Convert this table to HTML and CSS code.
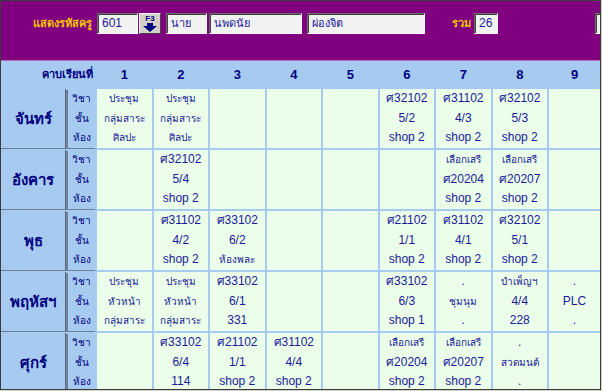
FILE: index.html
```html
<!DOCTYPE html>
<html lang="th">
<head>
<meta charset="utf-8">
<title>ตารางสอน</title>
<link rel="stylesheet" href="styles.css">
</head>
<body>
<div class="frame">
  <div class="topbar">
    <span class="lbl lbl-code">แสดงรหัสครู</span>
    <span class="field f-code">601</span>
    <span class="btn-f3"><span class="f3">F3</span><svg class="arrow" width="14" height="9" viewBox="0 0 14 9"><rect x="4" y="0" width="6" height="3" fill="#000080"/><polygon points="0,3 14,3 7,9" fill="#000080"/></svg></span>
    <span class="field f-title">นาย</span>
    <span class="field f-first">นพดนัย</span>
    <span class="field f-last">ผ่องจิต</span>
    <span class="lbl lbl-sum">รวม</span>
    <span class="field f-sum">26</span>
    <span class="field f-extra"></span>
  </div>
  <div class="grid">
    <div class="hd hd-title">คาบเรียนที่</div>
    <div class="hd">1</div><div class="hd">2</div><div class="hd">3</div><div class="hd">4</div><div class="hd">5</div><div class="hd">6</div><div class="hd">7</div><div class="hd">8</div><div class="hd">9</div>

    <div class="day">จันทร์</div>
    <div class="keys"><span>วิชา</span><span>ชั้น</span><span>ห้อง</span></div>
    <div class="cell th"><span>ประชุม</span><span>กลุ่มสาระ</span><span>ศิลปะ</span></div>
    <div class="cell th"><span>ประชุม</span><span>กลุ่มสาระ</span><span>ศิลปะ</span></div>
    <div class="cell"></div>
    <div class="cell"></div>
    <div class="cell"></div>
    <div class="cell"><span>ศ32102</span><span>5/2</span><span>shop 2</span></div>
    <div class="cell"><span>ศ31102</span><span>4/3</span><span>shop 2</span></div>
    <div class="cell"><span>ศ32102</span><span>5/3</span><span>shop 2</span></div>
    <div class="cell"></div>

    <div class="day">อังคาร</div>
    <div class="keys"><span>วิชา</span><span>ชั้น</span><span>ห้อง</span></div>
    <div class="cell"></div>
    <div class="cell"><span>ศ32102</span><span>5/4</span><span>shop 2</span></div>
    <div class="cell"></div>
    <div class="cell"></div>
    <div class="cell"></div>
    <div class="cell"></div>
    <div class="cell"><span class="t">เลือกเสรี</span><span>ศ20204</span><span>shop 2</span></div>
    <div class="cell"><span class="t">เลือกเสรี</span><span>ศ20207</span><span>shop 2</span></div>
    <div class="cell"></div>

    <div class="day">พุธ</div>
    <div class="keys"><span>วิชา</span><span>ชั้น</span><span>ห้อง</span></div>
    <div class="cell"></div>
    <div class="cell"><span>ศ31102</span><span>4/2</span><span>shop 2</span></div>
    <div class="cell"><span>ศ33102</span><span>6/2</span><span class="t">ห้องพละ</span></div>
    <div class="cell"></div>
    <div class="cell"></div>
    <div class="cell"><span>ศ21102</span><span>1/1</span><span>shop 2</span></div>
    <div class="cell"><span>ศ31102</span><span>4/1</span><span>shop 2</span></div>
    <div class="cell"><span>ศ32102</span><span>5/1</span><span>shop 2</span></div>
    <div class="cell"></div>

    <div class="day">พฤหัสฯ</div>
    <div class="keys"><span>วิชา</span><span>ชั้น</span><span>ห้อง</span></div>
    <div class="cell th"><span>ประชุม</span><span>หัวหน้า</span><span>กลุ่มสาระ</span></div>
    <div class="cell th"><span>ประชุม</span><span>หัวหน้า</span><span>กลุ่มสาระ</span></div>
    <div class="cell"><span>ศ33102</span><span>6/1</span><span>331</span></div>
    <div class="cell"></div>
    <div class="cell"></div>
    <div class="cell"><span>ศ33102</span><span>6/3</span><span>shop 1</span></div>
    <div class="cell"><span class="dot">.</span><span class="t">ชุมนุม</span><span class="dot">.</span></div>
    <div class="cell"><span class="t">บำเพ็ญฯ</span><span>4/4</span><span>228</span></div>
    <div class="cell"><span class="dot">.</span><span>PLC</span><span class="dot">.</span></div>

    <div class="day">ศุกร์</div>
    <div class="keys"><span>วิชา</span><span>ชั้น</span><span>ห้อง</span></div>
    <div class="cell"></div>
    <div class="cell"><span>ศ33102</span><span>6/4</span><span>114</span></div>
    <div class="cell"><span>ศ21102</span><span>1/1</span><span>shop 2</span></div>
    <div class="cell"><span>ศ31102</span><span>4/4</span><span>shop 2</span></div>
    <div class="cell"></div>
    <div class="cell"><span class="t">เลือกเสรี</span><span>ศ20204</span><span>shop 2</span></div>
    <div class="cell"><span class="t">เลือกเสรี</span><span>ศ20207</span><span>shop 2</span></div>
    <div class="cell"><span class="dot">.</span><span class="t">สวดมนต์</span><span class="dot">.</span></div>
    <div class="cell"></div>
  </div>
</div>
</body>
</html>
```
FILE: styles.css
```css
html, body {
  margin: 0;
  padding: 0;
  background: #d4d0c8;
}
body {
  font-family: "Liberation Sans", "Noto Sans", "DejaVu Sans", sans-serif;
  color: #1a1a9a;
}
.frame {
  width: 601px;
  height: 390px;
  box-sizing: border-box;
  border: 1px solid #3c3c3c;
  overflow: hidden;
  background: #a6caf0;
}
.topbar {
  height: 60px;
  box-sizing: border-box;
  background: #800080;
  border-bottom: 1px solid #b070b0;
  display: flex;
  align-items: flex-start;
  padding-top: 12px;
  overflow: hidden;
}
.topbar > * {
  flex-shrink: 0;
}
.lbl {
  color: #f0c400;
  font-size: 11px;
  font-weight: bold;
  line-height: 21px;
}
.lbl-code { margin-left: 32px; width: 64px; }
.lbl-sum { margin-left: 27px; width: 22px; }
.field {
  height: 21px;
  box-sizing: border-box;
  background: #f2f2f2;
  border-top: 1px solid #6a6a6a;
  border-left: 1px solid #6a6a6a;
  border-right: 1px solid #ffffff;
  border-bottom: 1px solid #ffffff;
  box-shadow: inset 1px 1px 0 #404040;
  color: #1a1a9a;
  font-size: 11px;
  line-height: 19px;
  padding-left: 4px;
  white-space: nowrap;
  overflow: hidden;
}
.f-code { width: 41px; font-size: 12px; }
.btn-f3 {
  width: 22px;
  height: 21px;
  margin-left: 1px;
  box-sizing: border-box;
  background: #d4d0c8;
  border-top: 1px solid #ffffff;
  border-left: 1px solid #ffffff;
  border-right: 1px solid #404040;
  border-bottom: 1px solid #404040;
  display: flex;
  flex-direction: column;
  align-items: center;
}
.f3 {
  font-size: 8px;
  line-height: 9px;
  color: #000080;
  font-weight: bold;
}
.arrow { display: block; }
.f-title { width: 41px; margin-left: 5px; }
.f-first { width: 93px; margin-left: 2px; }
.f-last { width: 118px; margin-left: 5px; }
.f-sum { width: 24px; margin-left: 0; font-size: 12px; }
.f-extra { width: 10px; margin-left: 97px; }

.grid {
  display: grid;
  grid-template-columns: 65px 27px repeat(8, 54.5px) 1fr;
  grid-template-rows: 26px repeat(5, 59px);
  gap: 2px;
  background: #a6caf0;
}
.hd {
  display: flex;
  align-items: center;
  justify-content: center;
  font-weight: bold;
  font-size: 13px;
  color: #000080;
}
.hd-title {
  grid-column: 1 / span 2;
  justify-content: flex-end;
  font-size: 11px;
  padding-right: 2px;
}
.day {
  display: flex;
  align-items: center;
  justify-content: center;
  font-weight: bold;
  font-size: 15px;
  color: #000080;
  border-right: 1px solid #5a6a80;
  box-shadow: 0 1px 0 #6f7f95;
}
.keys {
  display: flex;
  flex-direction: column;
  align-items: center;
  font-size: 10px;
  line-height: 19.5px;
  color: #000080;
  box-shadow: 0 1px 0 #6f7f95, -2px 1px 0 #6f7f95;
}
.cell {
  background: #ebfee9;
  display: flex;
  flex-direction: column;
  align-items: center;
  font-size: 12px;
  line-height: 19.5px;
  white-space: nowrap;
}
.cell .t, .cell.th span {
  font-size: 10px;
}
```
